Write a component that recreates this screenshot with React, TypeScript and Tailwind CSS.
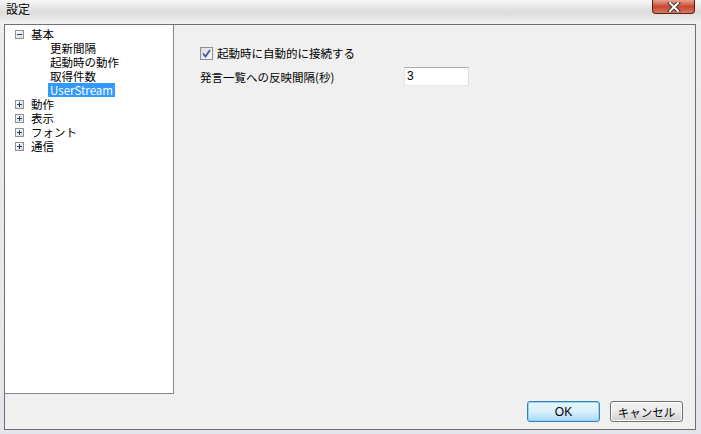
import React from 'react'

const jp = { fontFamily: '"Noto Sans CJK JP", "Liberation Sans", sans-serif' }

function Expander({ open }: { open?: boolean }) {
  return (
    <div className='w-[9px] h-[9px] border border-[#919191] bg-gradient-to-br from-white to-[#d8d8d8] flex items-center justify-center relative shrink-0'>
      <div className='w-[5px] h-[1px] bg-[#1e3f7a]' />
      {!open && <div className='absolute w-[1px] h-[5px] bg-[#1e3f7a]' />}
    </div>
  )
}

function TreeRow({ label, open, child, selected }: { label: string; open?: boolean; child?: boolean; selected?: boolean }) {
  if (child) {
    return (
      <div className='h-[14px] flex items-center pl-[43px]'>
        <span className={`px-[2px] leading-[14px] ${selected ? 'bg-[#3399ff] text-white' : 'text-black'}`}>{label}</span>
      </div>
    )
  }
  return (
    <div className='h-[14px] flex items-center pl-[10px] gap-[7px]'>
      <Expander open={open} />
      <span className='leading-[14px] text-black'>{label}</span>
    </div>
  )
}

function App() {
  return (
    <div className='w-[701px] h-[434px] overflow-hidden flex flex-col bg-gradient-to-b from-[#eeeeee] to-[#e4e4ec] text-[11.5px]' style={jp}>
      {/* title bar */}
      <div className='h-[24px] shrink-0 flex items-start bg-gradient-to-b from-[#f8f8f8] via-[#dcdcdc] to-[#f2f2f2]'>
        <span className='ml-[6px] mt-[1px] text-[12px] leading-[16px] text-black [text-shadow:0_0_4px_white]'>設定</span>
        <div className='ml-auto mr-[6px] w-[43px] h-[14px] rounded-b-[4px] border border-t-0 border-[#5e2016] bg-gradient-to-b from-[#e9a18f] via-[#c8472f] to-[#d87660] flex items-center justify-center'>
          <svg width='14' height='10' viewBox='0 0 14 10'>
            <path d='M3 1 L11 9 M11 1 L3 9' stroke='#3a3a3a' strokeWidth='4' strokeLinecap='square' />
            <path d='M3 1 L11 9 M11 1 L3 9' stroke='#ffffff' strokeWidth='2' strokeLinecap='square' />
          </svg>
        </div>
      </div>

      {/* client area */}
      <div className='ml-[4px] w-[692px] h-[406px] border border-[#707070] bg-[#f0f0f0] flex flex-col shrink-0'>
        <div className='flex'>
          <div className='w-[169px] h-[369px] bg-white border-r border-b border-[#828790] pt-[2px]'>
            <TreeRow label='基本' open />
            <TreeRow label='更新間隔' child />
            <TreeRow label='起動時の動作' child />
            <TreeRow label='取得件数' child />
            <TreeRow label='UserStream' child selected />
            <TreeRow label='動作' />
            <TreeRow label='表示' />
            <TreeRow label='フォント' />
            <TreeRow label='通信' />
          </div>

          <div className='flex-1 pl-[26px] pt-[21px] flex flex-col'>
            <div className='flex items-center gap-[4px] h-[14px]'>
              <div className='w-[13px] h-[13px] border border-[#8e8f8f] bg-gradient-to-br from-[#dcdcdc] to-[#f8f8f8] flex items-center justify-center'>
                <svg width='9' height='9' viewBox='0 0 9 9'>
                  <path d='M1 4.5 L3.5 7.5 L8 1' fill='none' stroke='#3b5aa6' strokeWidth='1.8' />
                </svg>
              </div>
              <span className='text-black leading-[14px]'>起動時に自動的に接続する</span>
            </div>
            <div className='flex items-center mt-[7px]'>
              <span className='w-[204px] text-black leading-[14px]'>発言一覧への反映間隔(秒)</span>
              <div className='w-[65px] h-[19px] bg-white border border-[#abadb3] border-l-[#e2e3ea] border-r-[#dbdfe6] border-b-[#e3e9ef] pl-[2px] text-black text-[12px] leading-[17px]' style={{ fontFamily: '"Liberation Sans", sans-serif' }}>
                3
              </div>
            </div>
          </div>
        </div>

        <div className='flex justify-end gap-[10px] pr-[12px] mt-[7px]'>
          <div className='w-[73px] h-[21px] rounded-[3px] border border-[#3c7fb1] bg-gradient-to-b from-[#eaf6fd] via-[#d9f0fc] to-[#a7d9f5] flex items-center justify-center shadow-[inset_0_0_0_1px_#8fd7f7] text-black text-[12px] leading-[14px]' style={{ fontFamily: '"Liberation Sans", sans-serif' }}>
            OK
          </div>
          <div className='w-[73px] h-[21px] rounded-[3px] border border-[#707070] bg-gradient-to-b from-[#f2f2f2] via-[#ebebeb] to-[#cfcfcf] flex items-center justify-center shadow-[inset_0_0_0_1px_#fcfcfc] text-black leading-[14px]'>
            キャンセル
          </div>
        </div>
      </div>
    </div>
  )
}

export default App
